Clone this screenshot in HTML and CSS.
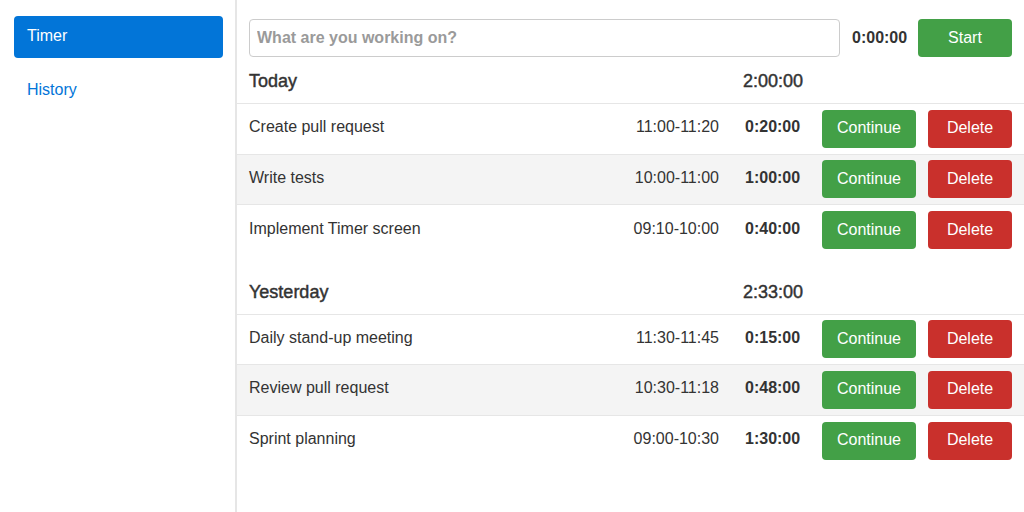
FILE: index.html
```html
<!DOCTYPE html>
<html lang="en">
<head>
<meta charset="utf-8">
<title>Timer</title>
<link rel="stylesheet" href="styles.css">
</head>
<body>
<div class="app">
  <nav class="sidebar">
    <a class="nav-item active" href="#">Timer</a>
    <a class="nav-item" href="#">History</a>
  </nav>
  <main class="main">
    <div class="topbar">
      <input class="task-input" type="text" placeholder="What are you working on?">
      <span class="clock">0:00:00</span>
      <button class="btn btn-green btn-start">Start</button>
    </div>

    <section class="day">
      <div class="day-head">
        <span class="day-name">Today</span>
        <span class="day-total">2:00:00</span>
      </div>
      <div class="row">
        <span class="name">Create pull request</span>
        <span class="range">11:00-11:20</span>
        <span class="dur">0:20:00</span>
        <button class="btn btn-green btn-cont">Continue</button>
        <button class="btn btn-red btn-del">Delete</button>
      </div>
      <div class="row">
        <span class="name">Write tests</span>
        <span class="range">10:00-11:00</span>
        <span class="dur">1:00:00</span>
        <button class="btn btn-green btn-cont">Continue</button>
        <button class="btn btn-red btn-del">Delete</button>
      </div>
      <div class="row">
        <span class="name">Implement Timer screen</span>
        <span class="range">09:10-10:00</span>
        <span class="dur">0:40:00</span>
        <button class="btn btn-green btn-cont">Continue</button>
        <button class="btn btn-red btn-del">Delete</button>
      </div>
    </section>

    <section class="day">
      <div class="day-head">
        <span class="day-name">Yesterday</span>
        <span class="day-total">2:33:00</span>
      </div>
      <div class="row">
        <span class="name">Daily stand-up meeting</span>
        <span class="range">11:30-11:45</span>
        <span class="dur">0:15:00</span>
        <button class="btn btn-green btn-cont">Continue</button>
        <button class="btn btn-red btn-del">Delete</button>
      </div>
      <div class="row">
        <span class="name">Review pull request</span>
        <span class="range">10:30-11:18</span>
        <span class="dur">0:48:00</span>
        <button class="btn btn-green btn-cont">Continue</button>
        <button class="btn btn-red btn-del">Delete</button>
      </div>
      <div class="row">
        <span class="name">Sprint planning</span>
        <span class="range">09:00-10:30</span>
        <span class="dur">1:30:00</span>
        <button class="btn btn-green btn-cont">Continue</button>
        <button class="btn btn-red btn-del">Delete</button>
      </div>
    </section>
  </main>
</div>
</body>
</html>
```

FILE: styles.css
```css
* { box-sizing: border-box; }
html, body { margin: 0; padding: 0; height: 100%; }
body {
  font-family: "Liberation Sans", Arial, sans-serif;
  font-size: 16px;
  color: #333;
  background: #fff;
}
.app {
  display: flex;
  min-height: 512px;
}
.sidebar {
  width: 237px;
  flex: none;
  border-right: 2px solid #e6e6e6;
  padding: 16px 12px 16px 14px;
  display: flex;
  flex-direction: column;
  gap: 12px;
}
.nav-item {
  display: block;
  height: 42px;
  line-height: 40px;
  padding: 0 13px;
  border-radius: 4px;
  color: #0275d8;
  text-decoration: none;
}
.nav-item.active {
  background: #0275d8;
  color: #fff;
  line-height: 39px;
}
.main {
  flex: 1;
  min-width: 0;
}
.topbar {
  display: flex;
  align-items: center;
  padding: 19px 12px 0;
  height: 57px;
}
.task-input {
  flex: 1;
  height: 38px;
  border: 1px solid #ccc;
  border-radius: 4px;
  padding: 0 7px;
  font-family: inherit;
  font-size: 16px;
  font-weight: bold;
  color: #333;
}
.task-input::placeholder { color: #9a9a9a; }
.clock {
  font-weight: bold;
  margin: 0 11px 0 12px;
  width: 55px;
}
.btn {
  height: 38px;
  border: none;
  border-radius: 4px;
  color: #fff;
  font-family: inherit;
  font-size: 16px;
  padding: 0 0 1px;
  flex: none;
}
.btn-green { background: #43a047; }
.btn-red { background: #c9302c; }
.btn-start { width: 94px; }
.btn-cont { width: 94px; margin-right: 12px; }
.btn-del { width: 84px; }

.day + .day { margin-top: 12px; }
.day-head {
  display: flex;
  align-items: center;
  height: 47px;
  padding: 3px 12px 0;
  border-bottom: 1px solid #e6e6e6;
  font-size: 18px;
}
.day-name, .day-total {
  font-weight: normal;
  -webkit-text-stroke: 0.45px currentColor;
}
.day-name { flex: 1; }
.day-total { width: 269px; }
.row {
  display: flex;
  align-items: center;
  height: 50.5px;
  padding: 0 12px;
  border-bottom: 1px solid #e6e6e6;
}
.row:nth-child(odd) { background: #f4f4f4; }
.row:last-child { border-bottom: none; }
.name, .range, .dur { padding-bottom: 3px; }
.name { flex: 1; }
.range { width: 110px; text-align: right; margin-right: 26px; }
.dur { width: 77px; font-weight: bold; }
```
